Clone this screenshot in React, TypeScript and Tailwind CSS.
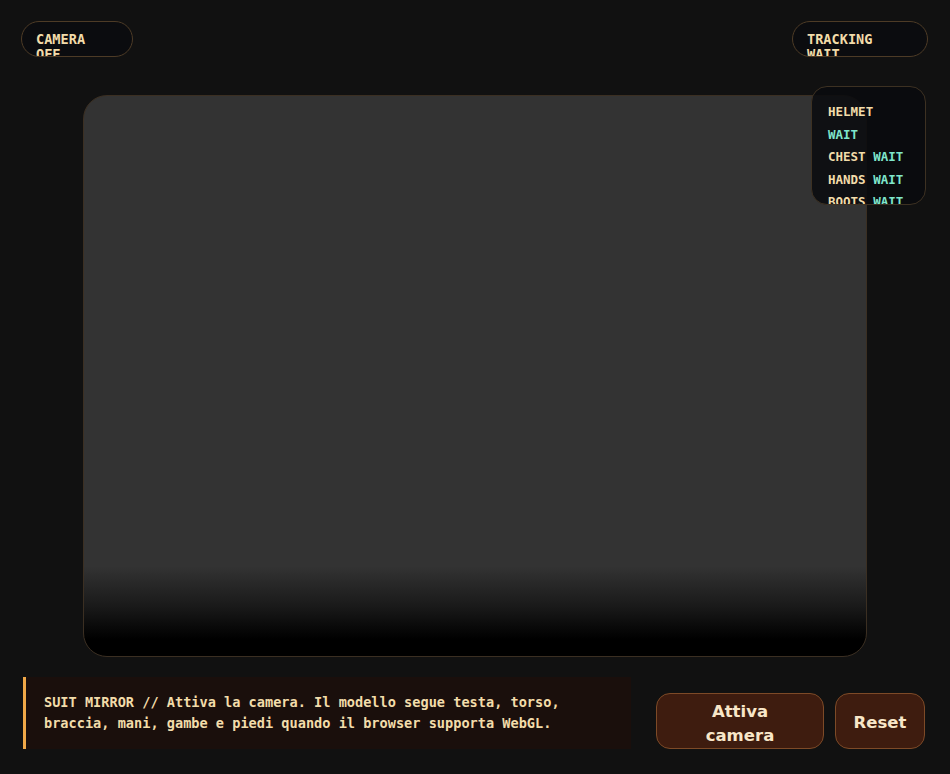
import React from 'react';

const mono = { fontFamily: '"DejaVu Sans Mono", "Liberation Mono", monospace' };

const parts = [
  { name: 'HELMET', state: 'WAIT' },
  { name: 'CHEST', state: 'WAIT' },
  { name: 'HANDS', state: 'WAIT' },
  { name: 'BOOTS', state: 'WAIT' },
];

function Pill({ label, width, inner }: { label: string; width: string; inner: string }) {
  return (
    <div
      className={`h-9 ${width} overflow-hidden rounded-full border border-[#4d3b26] bg-[#0b0c0f] pl-[14px] pt-[10px]`}
    >
      <span
        className={`block ${inner} text-[13.6px] font-bold leading-[15px] text-[#f2dcaa]`}
        style={mono}
      >
        {label}
      </span>
    </div>
  );
}

export default function App() {
  return (
    <div className="relative flex h-[774px] w-full flex-col overflow-hidden bg-[#111111]">
      {/* status pills */}
      <div className="flex items-start justify-between pl-[21px] pr-[22px] pt-[21px]">
        <Pill label="CAMERA OFF" width="w-[112px]" inner="w-[76px]" />
        <Pill label="TRACKING WAIT" width="w-[136px]" inner="w-[100px]" />
      </div>

      {/* camera viewport */}
      <div className="mx-auto mt-[38px] h-[562px] w-[784px] rounded-[24px] border border-[#3b2f22] bg-[linear-gradient(to_bottom,#333333_0%,#333333_84%,#1a1a1a_91%,#000000_97%)]" />

      {/* suit parts overlay */}
      <div
        className="absolute right-[24px] top-[86px] h-[119px] w-[115px] overflow-hidden rounded-[16px] border border-[#3d3122] bg-[rgba(9,11,14,0.86)] pl-[16px] pr-[18px] pt-[14px] text-[12.5px] font-bold leading-[22.5px]"
        style={mono}
      >
        {parts.map((p) => (
          <div key={p.name}>
            <span className="text-[#f2dcaa]">{p.name}</span>{' '}
            <span className="text-[#7fe6cc]">{p.state}</span>
          </div>
        ))}
      </div>

      {/* bottom bar */}
      <div className="mt-[20px] flex items-end justify-between pl-[23px] pr-[25px]">
        <div
          className="w-[608px] border-l-[3px] border-[#f0a848] bg-[#1a0f0c] py-[15px] pl-[18px] pr-4 text-[13.6px] font-bold leading-[21px] text-[#f2dcaa]"
          style={mono}
        >
          SUIT MIRROR // Attiva la camera. Il modello segue testa, torso, braccia, mani, gambe e
          piedi quando il browser supporta WebGL.
        </div>
        <div
          className="flex gap-[11px]"
          style={{ fontFamily: '"DejaVu Sans", "Liberation Sans", sans-serif' }}
        >
          <button className="h-[56px] w-[168px] rounded-[14px] border border-[#7d4a27] bg-[#3e1c0f] pt-[5px] text-[16.5px] font-bold leading-[24px] text-[#f8e6c8]">
            Attiva
            <br />
            camera
          </button>
          <button className="h-[56px] w-[90px] rounded-[14px] border border-[#7d4a27] bg-[#3e1c0f] pt-[3px] text-[16.5px] font-bold leading-[24px] text-[#f8e6c8]">
            Reset
          </button>
        </div>
      </div>
    </div>
  );
}
